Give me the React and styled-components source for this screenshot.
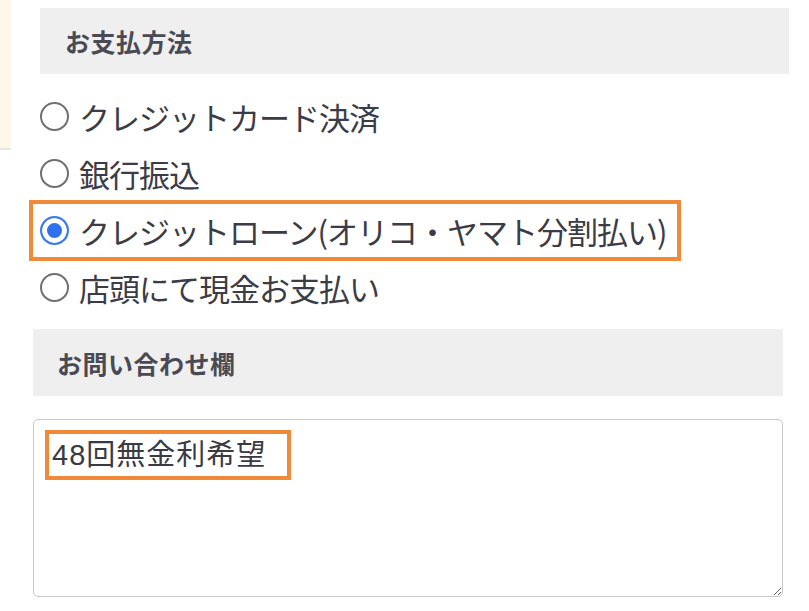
import React from 'react';
import styled, { createGlobalStyle } from 'styled-components';

const GlobalStyle = createGlobalStyle`
  body {
    margin: 0;
    background: #ffffff;
    font-family: "Noto Sans CJK JP", "Noto Sans", sans-serif;
  }
`;

const Page = styled.div`
  display: flex;
  align-items: flex-start;
  width: 809px;
  height: 611px;
  overflow: hidden;
`;

const SidePanel = styled.div`
  width: 11px;
  height: 148px;
  background: #fdf8ea;
  border-bottom: 2px solid #e8e6e1;
  flex-shrink: 0;
`;

const Main = styled.div`
  display: flex;
  flex-direction: column;
  margin-left: 22px;
  width: 750px;
  padding-top: 8px;
`;

const SectionHeader = styled.div`
  height: ${p => p.$h}px;
  margin-left: ${p => p.$indent}px;
  margin-right: ${p => p.$extend}px;
  background: #efefef;
  display: flex;
  align-items: center;
  padding-left: ${p => p.$pad}px;
  font-size: 25px;
  font-weight: 700;
  color: #4a4a55;
  letter-spacing: 0.5px;
`;

const RadioList = styled.div`
  display: flex;
  flex-direction: column;
  margin: 14px 0 13px -2px;
`;

const RadioRow = styled.label`
  display: flex;
  align-items: center;
  gap: 10px;
  width: fit-content;
  height: 57px;
  padding-left: 9px;
  padding-right: ${p => (p.$highlight ? 13 : 0)}px;
  outline: ${p => (p.$highlight ? '4px solid #f08a38' : 'none')};
  outline-offset: -2px;
  font-size: 31px;
  color: #3c3c46;
  letter-spacing: -1px;
  white-space: nowrap;
`;

const RadioInput = styled.input`
  appearance: none;
  margin: 0;
  width: 29px;
  height: 29px;
  border-radius: 50%;
  border: 2px solid #707070;
  background: #fff;
  flex-shrink: 0;

  &:checked {
    border: 2px solid #3a7bef;
    background: #2f70ee;
    box-shadow: inset 0 0 0 5px #fff;
  }
`;

const NoteBox = styled.div`
  position: relative;
  margin-top: 23px;
  height: 178px;
`;

const NoteArea = styled.textarea`
  box-sizing: border-box;
  width: 100%;
  height: 100%;
  margin: 0;
  border: 1.5px solid #c4c8ca;
  border-radius: 5px;
  padding: 15px 18px;
  font-family: "Liberation Sans", "Noto Sans CJK JP", sans-serif;
  font-size: 29px;
  line-height: 40px;
  letter-spacing: 1px;
  color: #3a3a44;
  background: #fff;
  resize: vertical;
  outline: none;
`;

const Highlight = styled.div`
  position: absolute;
  left: 12px;
  top: 11px;
  width: 246px;
  height: 50px;
  box-sizing: border-box;
  border: 4px solid #f08a38;
  pointer-events: none;
`;

const methods = [
  { label: 'クレジットカード決済' },
  { label: '銀行振込' },
  { label: 'クレジットローン(オリコ・ヤマト分割払い)', checked: true },
  { label: '店頭にて現金お支払い' },
];

export default function App() {
  return (
    <>
      <GlobalStyle />
      <Page>
        <SidePanel />
        <Main>
          <SectionHeader $h={66} $indent={7} $extend={-6} $pad={25}>
            お支払方法
          </SectionHeader>
          <RadioList>
            {methods.map(m => (
              <RadioRow key={m.label} $highlight={m.checked}>
                <RadioInput type="radio" name="pay" defaultChecked={m.checked} />
                {m.label}
              </RadioRow>
            ))}
          </RadioList>
          <SectionHeader $h={67} $indent={0} $extend={0} $pad={24}>
            お問い合わせ欄
          </SectionHeader>
          <NoteBox>
            <NoteArea defaultValue="48回無金利希望" readOnly />
            <Highlight />
          </NoteBox>
        </Main>
      </Page>
    </>
  );
}
